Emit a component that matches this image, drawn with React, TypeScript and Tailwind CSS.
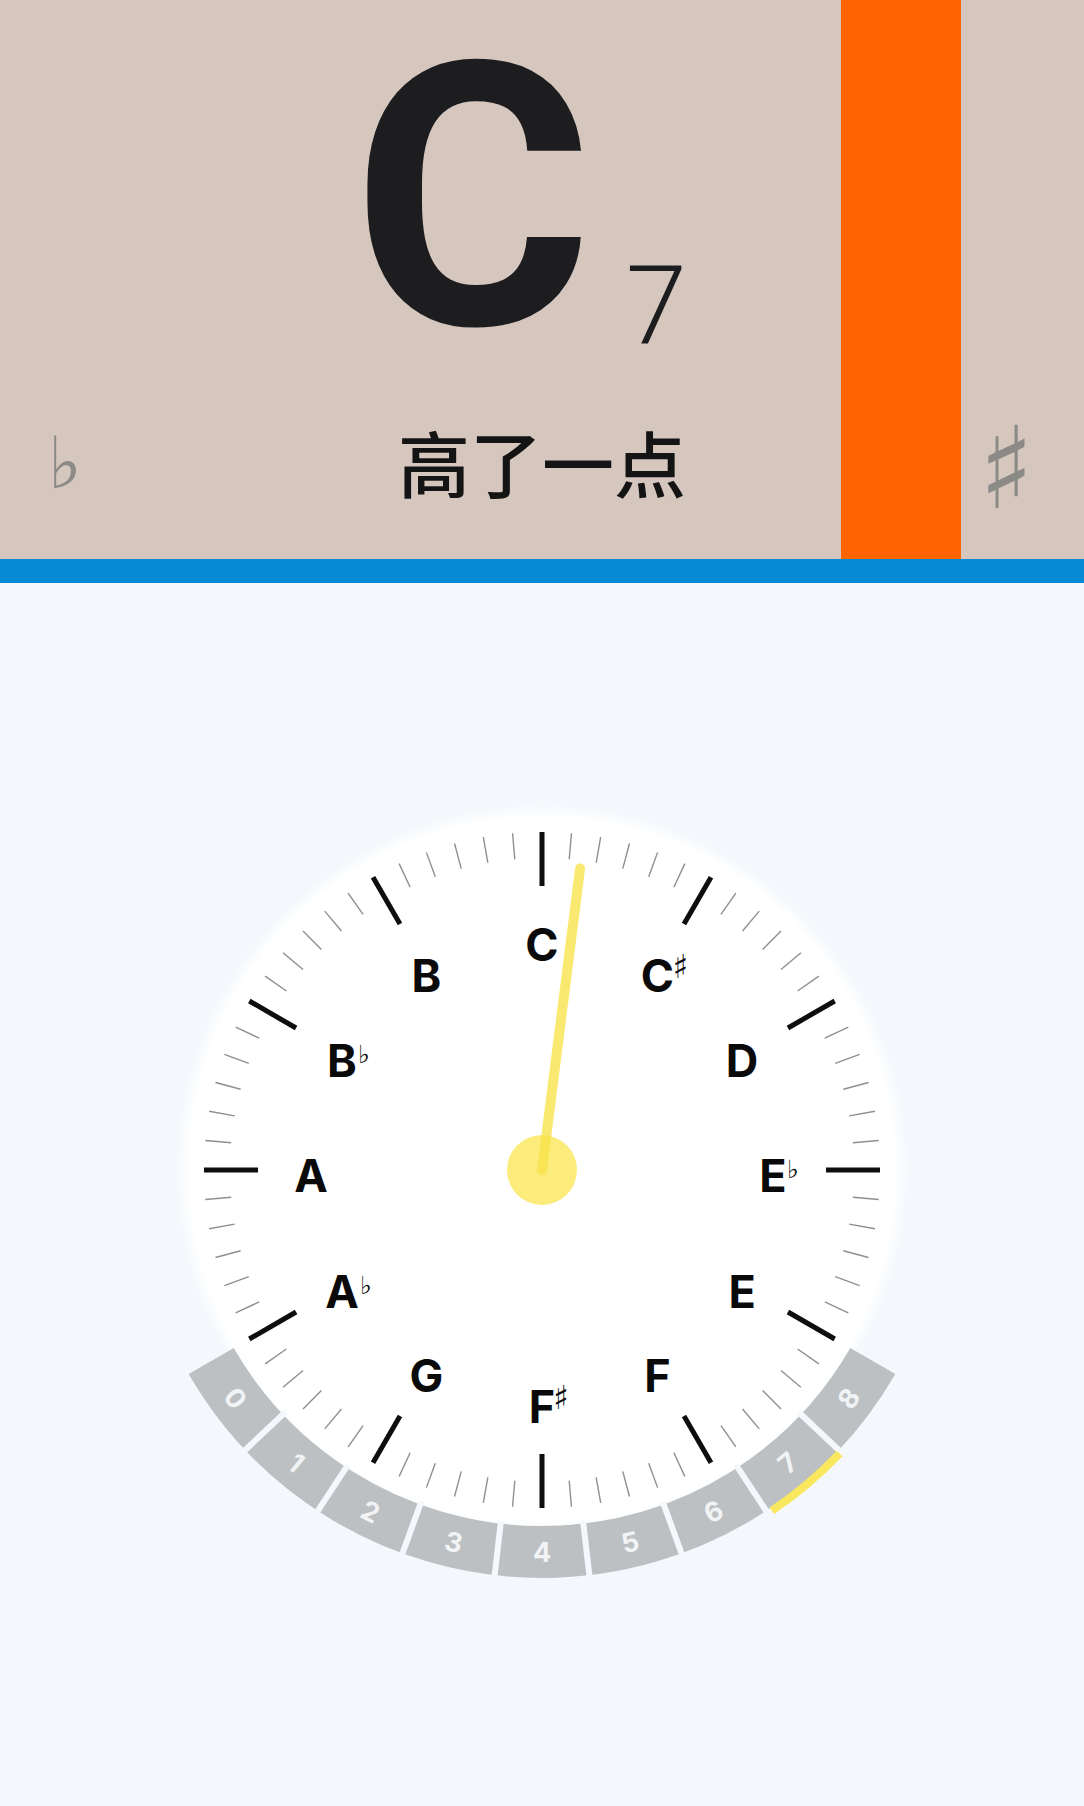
import React from "react"

const CX = 420
const CY = 420
const BG = "#f4f8fc"

const rad = (d: number) => (d * Math.PI) / 180
// angle measured clockwise from the top
const pt = (deg: number, r: number): [number, number] => [CX + r * Math.sin(rad(deg)), CY - r * Math.cos(rad(deg))]

const notes = [
  { n: "C", acc: "" },
  { n: "C", acc: "♯" },
  { n: "D", acc: "" },
  { n: "E", acc: "♭" },
  { n: "E", acc: "" },
  { n: "F", acc: "" },
  { n: "F", acc: "♯" },
  { n: "G", acc: "" },
  { n: "A", acc: "♭" },
  { n: "A", acc: "" },
  { n: "B", acc: "♭" },
  { n: "B", acc: "" },
]

const halfWidth: Record<string, number> = { A: 16, B: 14, C: 15, D: 15, E: 12, F: 11, G: 16 }

// phi: measured from straight down, positive to the right
const bandPt = (phi: number, r: number) => pt(180 - phi, r)

function arc(phiFrom: number, phiTo: number, r: number) {
  const [x1, y1] = bandPt(phiFrom, r)
  const [x2, y2] = bandPt(phiTo, r)
  const large = Math.abs(phiTo - phiFrom) > 180 ? 1 : 0
  return `M ${x1} ${y1} A ${r} ${r} 0 ${large} 0 ${x2} ${y2}`
}

function Dial() {
  const seg = 120 / 9
  const ticks = Array.from({ length: 72 }, (_, k) => k * 5)
  const [nx, ny] = pt(7.2, 304)
  return (
    <svg width="840" height="840" viewBox="0 0 840 840">
      <defs>
        <filter id="halo" x="-20%" y="-20%" width="140%" height="140%">
          <feGaussianBlur stdDeviation="5" />
        </filter>
      </defs>
      <circle cx={CX} cy={CY} r={359} fill="#ffffff" filter="url(#halo)" />
      <circle cx={CX} cy={CY} r={353} fill="#ffffff" />

      {ticks.map((a) => {
        const major = a % 30 === 0
        const [x1, y1] = pt(a, 338)
        const [x2, y2] = pt(a, major ? 284 : 312)
        return (
          <line
            key={a}
            x1={x1}
            y1={y1}
            x2={x2}
            y2={y2}
            stroke={major ? "#0e0e0e" : "#8f8f8f"}
            strokeWidth={major ? 5 : 1.4}
          />
        )
      })}

      {notes.map((note, i) => {
        const a = i * 30
        const x = CX + 231 * Math.sin(rad(a))
        const y = CY + 6 - 231 * Math.cos(rad(a))
        const hw = halfWidth[note.n]
        const sharp = note.acc === "♯"
        return (
          <g key={i} fill="#0a0a0a">
            <text
              x={x}
              y={y + 16}
              textAnchor="middle"
              fontSize="45"
              fontWeight="700"
              fontFamily="Inter, 'Liberation Sans', sans-serif"
            >
              {note.n}
            </text>
            {note.acc && (
              <text
                x={x + hw + (sharp ? 0 : 2)}
                y={sharp ? y + 2 : y + 2}
                fontSize={sharp ? 33 : 25}
                fontFamily="'DejaVu Sans', sans-serif"
              >
                {note.acc}
              </text>
            )}
          </g>
        )
      })}

      <path d={arc(-60, 60, 382)} fill="none" stroke="#bdc0c2" strokeWidth="52" />
      {Array.from({ length: 8 }, (_, k) => {
        const phi = -60 + (k + 1) * seg
        const [x1, y1] = bandPt(phi, 353)
        const [x2, y2] = bandPt(phi, 412)
        return <line key={k} x1={x1} y1={y1} x2={x2} y2={y2} stroke={BG} strokeWidth="6" />
      })}
      {Array.from({ length: 9 }, (_, i) => {
        const phi = -60 + (i + 0.5) * seg
        const [x, y] = bandPt(phi, 382)
        return (
          <g key={i} transform={`translate(${x} ${y}) rotate(${-phi})`}>
            <text
              x="0"
              y="10"
              textAnchor="middle"
              fontSize="27"
              fontWeight="700"
              fontFamily="Inter, sans-serif"
              fill="#f1f3f5"
            >
              {i}
            </text>
          </g>
        )
      })}
      <path d={arc(34, 46.4, 411)} fill="none" stroke="#f9e85e" strokeWidth="8" />

      <circle cx={CX} cy={CY} r={35} fill="#f9e44a" opacity="0.72" />
      <line x1={CX} y1={CY} x2={nx} y2={ny} stroke="#f9e44a" strokeWidth="10" strokeLinecap="round" opacity="0.78" />
    </svg>
  )
}

export default function App() {
  return (
    <div className="min-h-screen w-full bg-[#f4f8fc]">
      <header className="relative h-[559px] overflow-hidden bg-[#d5c7be]">
        <div className="absolute inset-y-0 left-[841px] w-[120px] bg-[#ff6400]" />
        <div className="relative flex h-full flex-col">
          <div className="flex items-start pl-[352px] text-[#1d1c1f]">
            <span className="font-['Roboto',sans-serif] text-[368px] font-bold leading-[1.08]">C</span>
            <span className="ml-[33px] mt-[251px] font-['Roboto',sans-serif] text-[110px] font-light leading-none">7</span>
          </div>
          <div className="mt-[28px] grid grid-cols-[1fr_auto_1fr] items-start">
            <div className="pl-[48px] pt-[2px] font-['DejaVu_Sans',sans-serif] text-[72px] leading-none text-[#8b8a86]">
              ♭
            </div>
            <div className="font-['Noto_Sans_CJK_SC',sans-serif] text-[72px] font-medium leading-none text-[#141414]">
              高了一点
            </div>
            <div className="-mt-[13px] flex justify-end pr-[50px] font-['DejaVu_Sans',sans-serif] text-[114px] leading-none text-[#8b8a86]">
              ♯
            </div>
          </div>
        </div>
      </header>
      <div className="h-[24px] bg-[#0789d3]" />
      <main className="flex justify-center pt-[167px] pb-[56px]">
        <Dial />
      </main>
    </div>
  )
}
